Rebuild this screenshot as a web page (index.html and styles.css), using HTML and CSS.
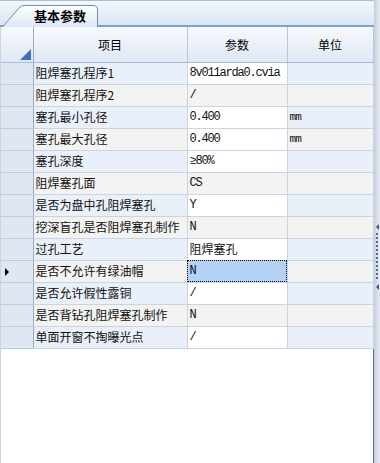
FILE: index.html
```html
<!DOCTYPE html>
<html lang="zh">

<head>
	<meta charset="utf-8">
	<meta name="viewport" content="width=device-width, initial-scale=1.0">
	<title>基本参数</title>
	<link rel="stylesheet" href="styles.css">
</head>

<body>
	<div class="frame">
		<div class="main">
			<div class="tabstrip">
				<div class="tab">
					<svg class="tab_shape" width="96" height="22" viewBox="0 0 96 22">
						<defs>
							<linearGradient id="tabfill" x1="0" y1="0" x2="0" y2="1">
								<stop offset="0" stop-color="#ffffff" />
								<stop offset="1" stop-color="#dce7f6" />
							</linearGradient>
						</defs>
						<path d="M0.5 22 L17 3 Q19 0.5 22 0.5 L91 0.5 Q95.5 0.5 95.5 5 L95.5 22" fill="url(#tabfill)" stroke="#6d8dbf" />
					</svg>
					<span class="tab_label">基本参数</span>
				</div>
			</div>

			<div class="grid">
				<table>
					<colgroup>
						<col class="c_row">
						<col class="c_name">
						<col class="c_value">
						<col class="c_unit">
					</colgroup>
					<thead>
						<tr>
							<th class="corner"><span class="corner_mark"></span></th>
							<th>项目</th>
							<th>参数</th>
							<th>单位</th>
						</tr>
					</thead>
					<tbody>
						<tr class="odd">
							<td class="rh"></td>
							<td>阻焊塞孔程序1</td>
							<td class="val edit mono">8v011arda0.cvia</td>
							<td class="unit"></td>
						</tr>
						<tr class="even">
							<td class="rh"></td>
							<td>阻焊塞孔程序2</td>
							<td class="val mono">/</td>
							<td class="unit"></td>
						</tr>
						<tr class="odd">
							<td class="rh"></td>
							<td>塞孔最小孔径</td>
							<td class="val edit mono">0.400</td>
							<td class="unit mono">mm</td>
						</tr>
						<tr class="even">
							<td class="rh"></td>
							<td>塞孔最大孔径</td>
							<td class="val edit mono">0.400</td>
							<td class="unit mono">mm</td>
						</tr>
						<tr class="odd">
							<td class="rh"></td>
							<td>塞孔深度</td>
							<td class="val edit mono">&ge;80%</td>
							<td class="unit"></td>
						</tr>
						<tr class="even">
							<td class="rh"></td>
							<td>阻焊塞孔面</td>
							<td class="val mono">CS</td>
							<td class="unit"></td>
						</tr>
						<tr class="odd">
							<td class="rh"></td>
							<td>是否为盘中孔阻焊塞孔</td>
							<td class="val edit mono">Y</td>
							<td class="unit"></td>
						</tr>
						<tr class="even">
							<td class="rh"></td>
							<td>挖深盲孔是否阻焊塞孔制作</td>
							<td class="val mono">N</td>
							<td class="unit"></td>
						</tr>
						<tr class="odd">
							<td class="rh"></td>
							<td>过孔工艺</td>
							<td class="val edit">阻焊塞孔</td>
							<td class="unit"></td>
						</tr>
						<tr class="even current">
							<td class="rh"><span class="row_arrow"></span></td>
							<td>是否不允许有绿油帽</td>
							<td class="val selected mono">N</td>
							<td class="unit"></td>
						</tr>
						<tr class="odd">
							<td class="rh"></td>
							<td>是否允许假性露铜</td>
							<td class="val edit mono">/</td>
							<td class="unit"></td>
						</tr>
						<tr class="even">
							<td class="rh"></td>
							<td>是否背钻孔阻焊塞孔制作</td>
							<td class="val mono">N</td>
							<td class="unit"></td>
						</tr>
						<tr class="odd">
							<td class="rh"></td>
							<td>单面开窗不掏曝光点</td>
							<td class="val edit mono">/</td>
							<td class="unit"></td>
						</tr>
					</tbody>
				</table>
			</div>
		</div>

		<div class="splitter">
			<span class="split_arrow"></span>
			<span class="split_grip"></span>
			<span class="split_arrow"></span>
		</div>
	</div>
</body>

</html>
```

FILE: styles.css
```css
* {
	margin: 0;
	padding: 0;
	box-sizing: border-box;
}

body {
	width: 380px;
	height: 463px;
	overflow: hidden;
	background: #ffffff;
	font-family: "Noto Sans CJK SC", "Liberation Sans", sans-serif;
	font-size: 12px;
	color: #000000;
}

.frame {
	display: flex;
	height: 463px;
}

.main {
	width: 374px;
	display: flex;
	flex-direction: column;
}

/* tab strip */
.tabstrip {
	height: 27px;
	padding: 4px 0 0 2px;
	background: linear-gradient(#f4f7fb, #dbe6f4);
	border-top: 1px solid #a9bcd6;
	border-bottom: 2px solid #7e9fcf;
	display: flex;
	align-items: flex-end;
}

.tab {
	position: relative;
	width: 96px;
	height: 22px;
	margin-bottom: -2px;
}

.tab_shape {
	position: absolute;
	left: 0;
	top: 0;
}

.tab_label {
	position: relative;
	display: block;
	padding: 2px 0 0 32px;
	font-size: 13px;
	font-weight: bold;
	line-height: 17px;
}

/* grid */
.grid {
	flex: 1;
	border-left: 1px solid #ccd6e3;
	border-right: 1px solid #4f6e98;
	background: #ffffff;
}

table {
	width: 372px;
	table-layout: fixed;
	border-collapse: collapse;
}

.c_row {
	width: 32px;
}

.c_name {
	width: 154px;
}

.c_value {
	width: 100px;
}

.c_unit {
	width: 86px;
}

th {
	height: 35px;
	font-weight: normal;
	font-size: 12px;
	text-align: center;
	background: linear-gradient(#f7f9fc, #dfe8f5);
	border-right: 1px solid #b7c7de;
	border-bottom: 1px solid #a7bad6;
	padding-top: 1px;
}

th.corner {
	position: relative;
	border-right: 1px solid #97acc9;
}

.corner_mark {
	position: absolute;
	right: 2px;
	bottom: 2px;
	width: 0;
	height: 0;
	border-left: 11px solid transparent;
	border-bottom: 11px solid #3f6fc2;
}

td {
	height: 22px;
	padding: 0 2px;
	line-height: 20px;
	white-space: nowrap;
	overflow: hidden;
	border-right: 1px solid #c7d4e7;
	border-bottom: 1px solid #c7d4e7;
	color: #111111;
}

tr.odd td {
	background: #e9f0fa;
}

tr.even td {
	background: #f3f3f1;
}

tr td.rh {
	background: #dfe7f3;
	border-right: 1px solid #97acc9;
	border-bottom: 1px solid #bccbe0;
	position: relative;
}

tr td.edit {
	background: #ffffff;
}

tr td.selected {
	background: #b3d2f5;
	outline: 1px dotted #000000;
	outline-offset: -1px;
}

.mono {
	font-family: "Liberation Mono", "Noto Sans CJK SC", monospace;
	font-size: 12px;
	letter-spacing: -1.2px;
}

.val {
	padding-left: 2px;
}

.unit {
	padding-left: 2px;
	font-size: 10px;
}

.unit.mono {
	font-size: 11px;
	letter-spacing: -0.8px;
}

.row_arrow {
	position: absolute;
	left: 4px;
	top: 7px;
	width: 0;
	height: 0;
	border-top: 4px solid transparent;
	border-bottom: 4px solid transparent;
	border-left: 4px solid #000000;
}

/* splitter at the right edge */
.splitter {
	width: 6px;
	background: linear-gradient(to right, #c4ceda, #e9edf3);
	display: flex;
	flex-direction: column;
	align-items: center;
	padding-top: 224px;
	gap: 3px;
}

.split_arrow {
	width: 0;
	height: 0;
	border-top: 3px solid transparent;
	border-bottom: 3px solid transparent;
	border-right: 3px solid #44597a;
}

.split_grip {
	width: 2px;
	height: 48px;
	background: repeating-linear-gradient(#5a6f90 0 2px, transparent 2px 4px);
}
```
